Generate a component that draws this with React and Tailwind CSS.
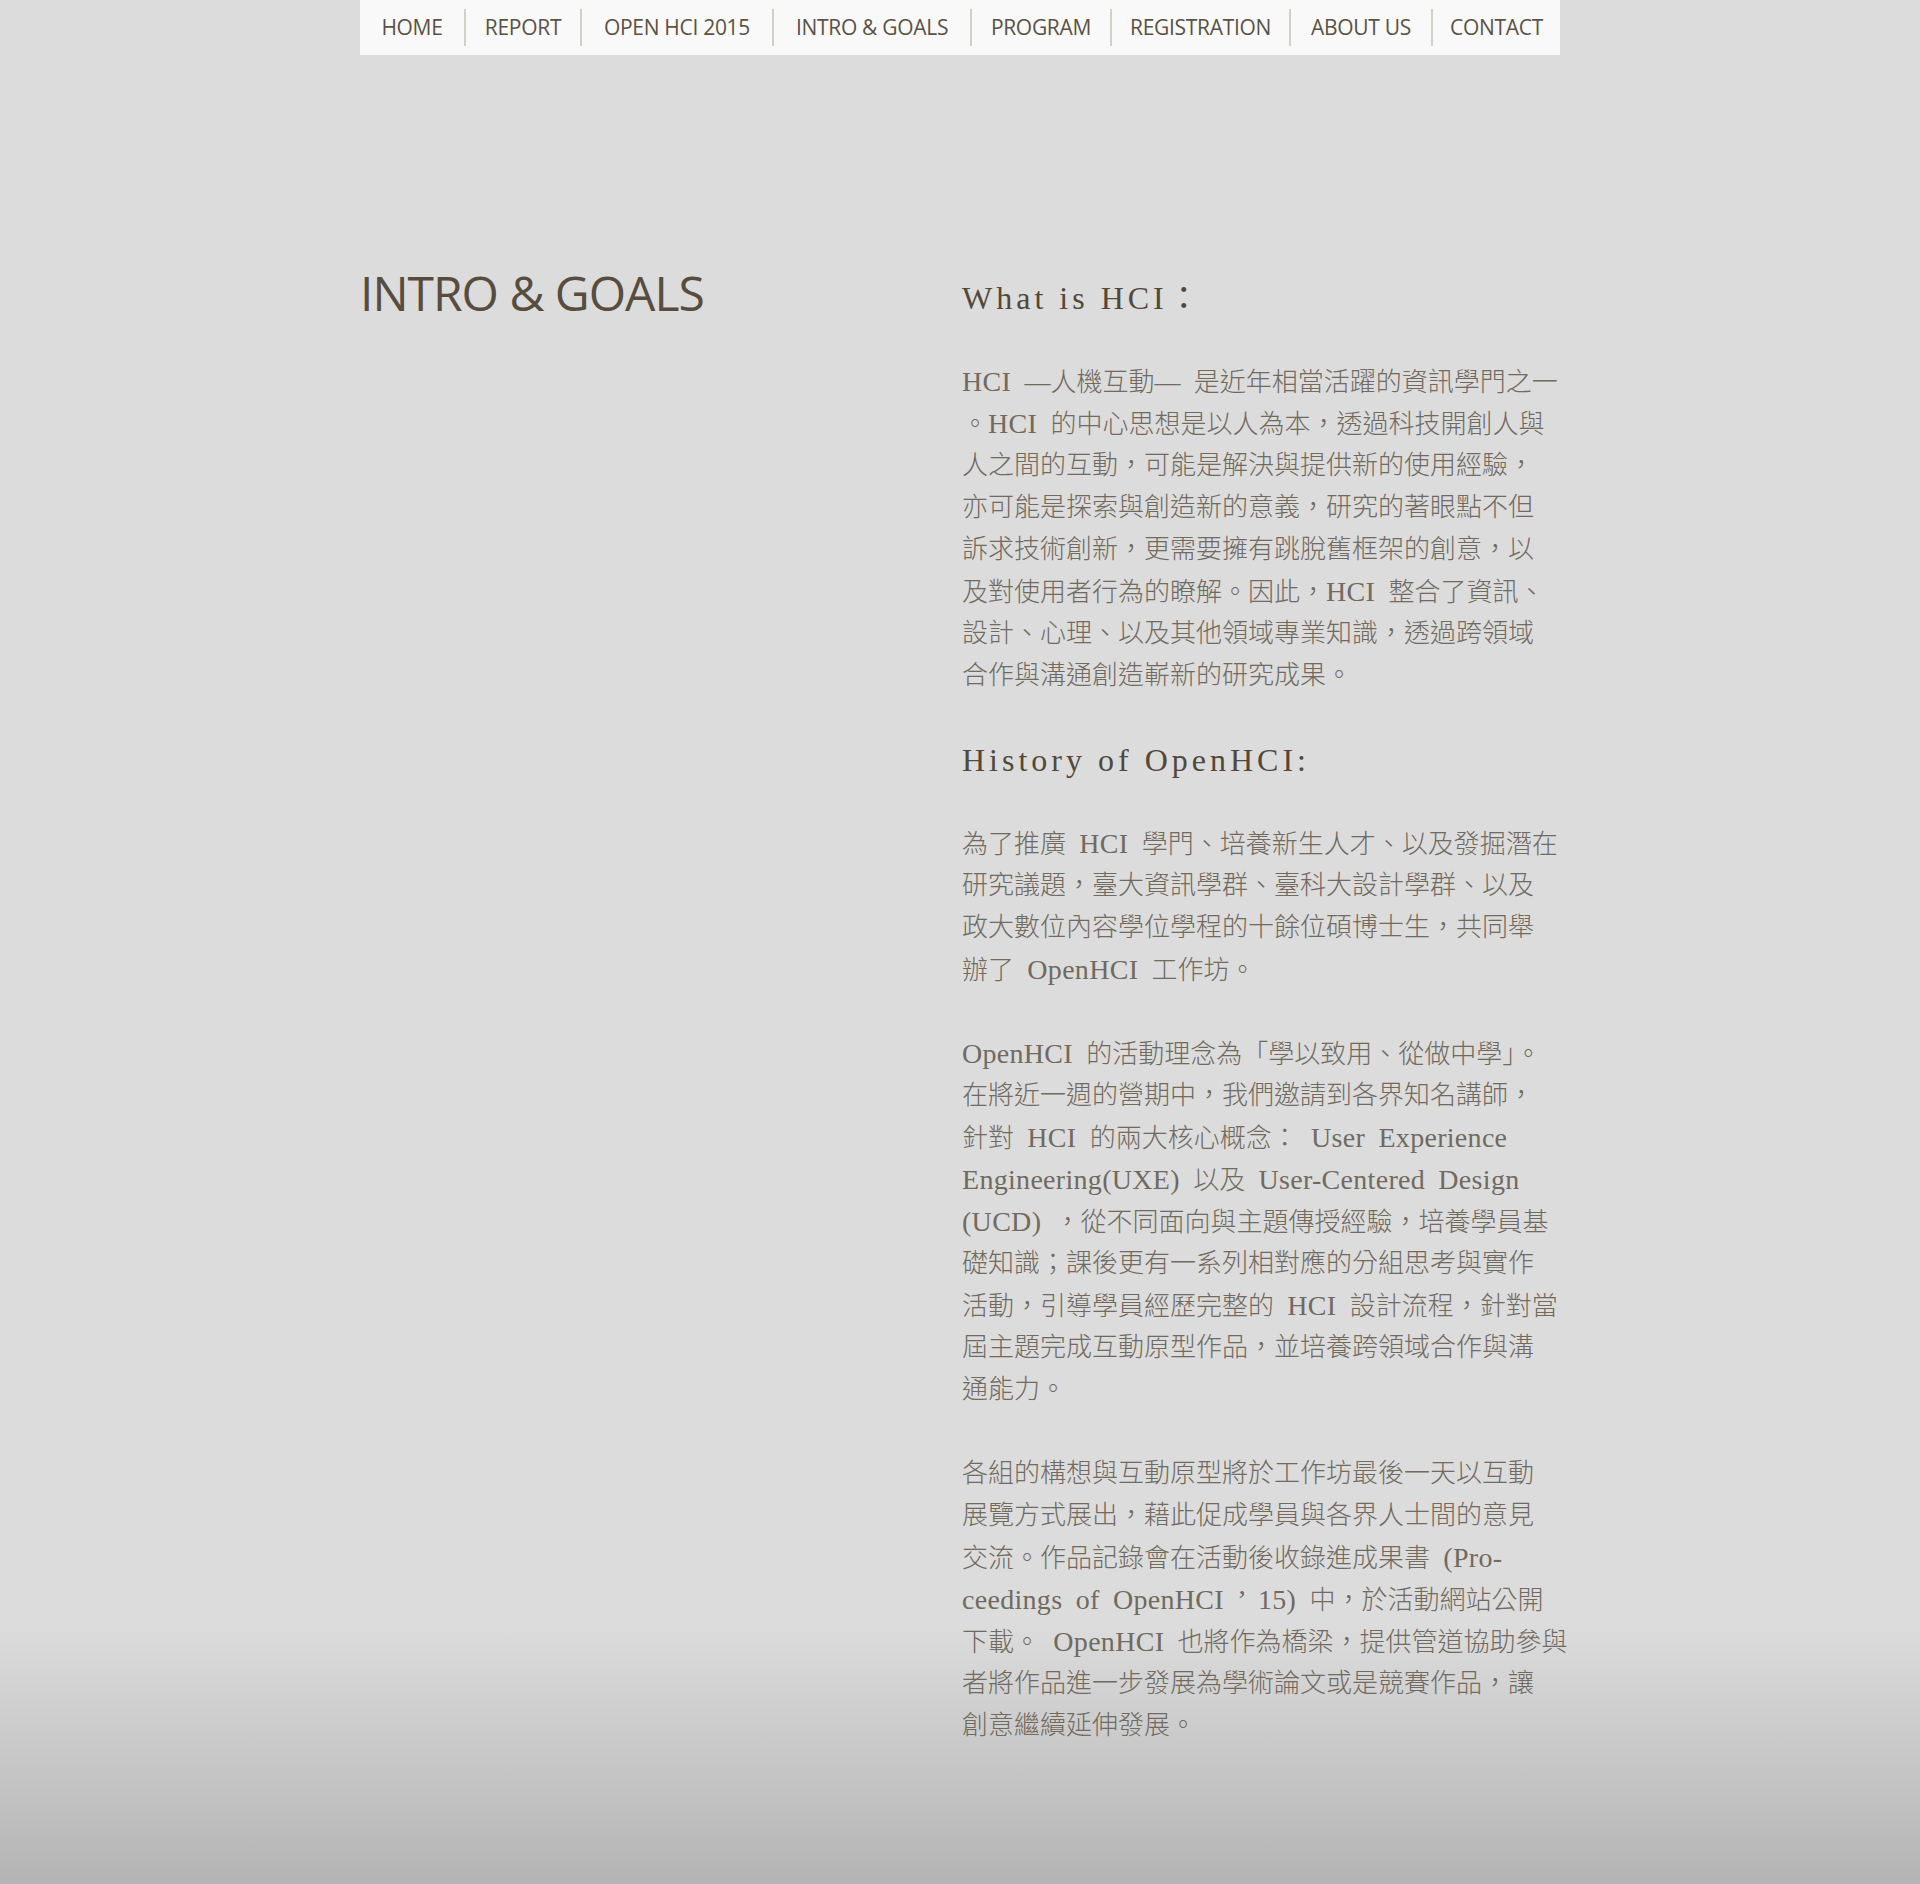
import React from "react";

const navItems = [
  { label: "HOME", w: "w-[104px]" },
  { label: "REPORT", w: "w-[116px]" },
  { label: "OPEN HCI 2015", w: "w-[192px]" },
  { label: "INTRO & GOALS", w: "w-[198px]" },
  { label: "PROGRAM", w: "w-[140px]" },
  { label: "REGISTRATION", w: "w-[179px]" },
  { label: "ABOUT US", w: "w-[142px]" },
  { label: "CONTACT", w: "w-[129px]" },
];

// each entry is one printed line, as it wraps on the original page
const sections = [
  { type: "h", text: "What is HCI：" },
  {
    type: "p",
    lines: [
      "HCI —人機互動— 是近年相當活躍的資訊學門之一",
      "。HCI 的中心思想是以人為本，透過科技開創人與",
      "人之間的互動，可能是解決與提供新的使用經驗，",
      "亦可能是探索與創造新的意義，研究的著眼點不但",
      "訴求技術創新，更需要擁有跳脫舊框架的創意，以",
      "及對使用者行為的瞭解。因此，HCI 整合了資訊、",
      "設計、心理、以及其他領域專業知識，透過跨領域",
      "合作與溝通創造嶄新的研究成果。",
    ],
  },
  { type: "h", text: "History of OpenHCI:" },
  {
    type: "p",
    lines: [
      "為了推廣 HCI 學門、培養新生人才、以及發掘潛在",
      "研究議題，臺大資訊學群、臺科大設計學群、以及",
      "政大數位內容學位學程的十餘位碩博士生，共同舉",
      "辦了 OpenHCI 工作坊。",
    ],
  },
  {
    type: "p",
    lines: [
      "OpenHCI 的活動理念為「學以致用、從做中學」。",
      "在將近一週的營期中，我們邀請到各界知名講師，",
      "針對 HCI 的兩大核心概念： User Experience",
      "Engineering(UXE) 以及 User-Centered Design",
      "(UCD) ，從不同面向與主題傳授經驗，培養學員基",
      "礎知識；課後更有一系列相對應的分組思考與實作",
      "活動，引導學員經歷完整的 HCI 設計流程，針對當",
      "屆主題完成互動原型作品，並培養跨領域合作與溝",
      "通能力。",
    ],
  },
  {
    type: "p",
    lines: [
      "各組的構想與互動原型將於工作坊最後一天以互動",
      "展覽方式展出，藉此促成學員與各界人士間的意見",
      "交流。作品記錄會在活動後收錄進成果書 (Pro-",
      "ceedings of OpenHCI ’ 15) 中，於活動網站公開",
      "下載。 OpenHCI 也將作為橋梁，提供管道協助參與",
      "者將作品進一步發展為學術論文或是競賽作品，讓",
      "創意繼續延伸發展。",
    ],
  },
];

// latin runs get a slightly larger serif so they keep the width of the half-width glyphs
const mixed = (line) =>
  line.split(/([\x20-\x7E’]+)/).map((part, i) =>
    i % 2 ? (
      <span key={i} className="text-[28px] tracking-[0.3px]">
        {part}
      </span>
    ) : (
      part
    )
  );

const Nav = () => (
  <nav className="flex h-[55px] bg-[#f9f9f9] font-['Open_Sans',sans-serif] text-[21px] tracking-[-0.3px] text-[#5a5244]">
    {navItems.map((item, i) => (
      <a key={item.label} href="#" className={`flex h-full items-center ${item.w}`}>
        {i > 0 && <span className="h-[37px] w-[2px] bg-[#d3d0ca]" />}
        <span className="flex-1 text-center">{item.label}</span>
      </a>
    ))}
  </nav>
);

export default function App() {
  return (
    <div className="h-[1884px] bg-[linear-gradient(to_bottom,#dcdcdc_0px,#dcdcdc_1625px,#b4b4b4_1884px)]">
      <div className="mx-auto w-[1200px]">
        <Nav />

        <div className="flex pt-[208px]">
          {/* left column: page title */}
          <div className="w-[602px] shrink-0">
            <h1 className="h-[60px] font-['Open_Sans',sans-serif] text-[48px] leading-[60px] tracking-[-1px] text-[#574d3f]">
              INTRO &amp; GOALS
            </h1>
          </div>

          {/* right column: text on a 42px line grid */}
          <div className="mt-[14px] flex flex-col gap-[42px] font-['Liberation_Serif','Noto_Sans_CJK_TC',serif] text-[26px] font-light leading-[42px] text-[#706a5f] [word-spacing:6px]">
            {sections.map((s, i) =>
              s.type === "h" ? (
                <h2 key={i} className="whitespace-nowrap text-[32px] font-normal leading-[42px] tracking-[4px] text-[#52483a] [word-spacing:0px]">
                  {s.text}
                </h2>
              ) : (
                <div key={i}>
                  {s.lines.map((line, j) => (
                    <div key={j} className="h-[42px] whitespace-nowrap">
                      {mixed(line)}
                    </div>
                  ))}
                </div>
              )
            )}
          </div>
        </div>
      </div>
    </div>
  );
}
